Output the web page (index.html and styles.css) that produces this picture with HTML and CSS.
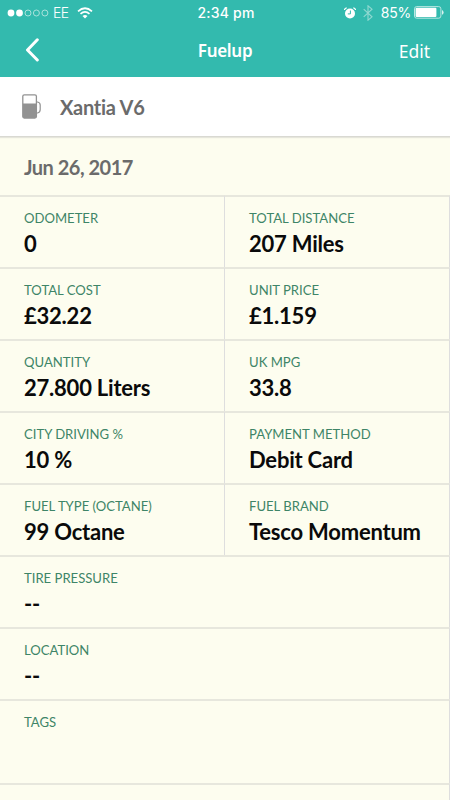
FILE: index.html
```html
<!DOCTYPE html>
<html lang="en">
<head>
<meta charset="utf-8">
<title>Fuelup</title>
<link rel="stylesheet" href="styles.css">
</head>
<body>
<header class="top">
  <div class="status">
    <div class="carrier">
      <svg class="signal" width="42" height="8" viewBox="0 0 42 8"><g fill="#fff"><circle cx="4" cy="4" r="3.4"/><circle cx="12.5" cy="4" r="3.4"/></g><g fill="none" stroke="#c5ebe6" stroke-width=".8"><circle cx="21" cy="4" r="3"/><circle cx="29.4" cy="4" r="3"/><circle cx="37.9" cy="4" r="3"/></g></svg>
      <span class="network">EE</span>
      <svg class="wifi" width="16" height="12" viewBox="0 0 16 12"><g fill="none" stroke="#fff" stroke-width="1.7"><path d="M1 4.3Q8-1.8 15 4.3"/><path d="M3.5 6.9Q8 3 12.5 6.9"/></g><path fill="#fff" d="M5.5 9Q8 7 10.5 9L8 11.5Z"/></svg>
    </div>
    <span class="clock">2:34 pm</span>
    <div class="power">
      <svg class="alarm" width="12" height="12" viewBox="0 0 12 12"><circle cx="6" cy="6.5" r="5" fill="#fff"/><path d="M.5 3Q.7 1 2.7.8M9.3.8Q11.3 1 11.5 3" fill="none" stroke="#fff" stroke-width="1.2"/><path d="M6.4 3.5V6.9H3.8" fill="none" stroke="#33baae" stroke-width="1"/></svg>
      <svg class="bluetooth" width="10" height="16" viewBox="0 0 10 16"><path d="M.7 4.2 9 11.8 5 15.2V.8L9 4.2.7 11.8" fill="none" stroke="#92d9d1" stroke-width="1.1"/></svg>
      <span class="percent">85%</span>
      <svg class="battery" width="30" height="13" viewBox="0 0 30 13"><rect x=".5" y=".6" width="26.4" height="11.6" rx="2.2" fill="none" stroke="#b9e7e2"/><rect x="1.6" y="1.7" width="20.8" height="9.4" rx="1" fill="#fff"/><path d="M28 4Q29.6 4.8 29.6 6.4T28 8.8Z" fill="#d9f2ef"/></svg>
    </div>
  </div>
  <nav class="nav">
    <svg class="back" width="16" height="24" viewBox="0 0 16 24"><path d="M12.3 1.8 2.5 12l9.8 10" fill="none" stroke="#fff" stroke-width="3" stroke-linecap="round" stroke-linejoin="round"/></svg>
    <h1 class="title">Fuelup</h1>
    <span class="edit">Edit</span>
  </nav>
</header>
<section class="vehicle">
  <svg class="pump" width="20" height="25" viewBox="0 0 20 25"><rect x=".8" y=".8" width="13.6" height="23.2" rx="1.5" fill="#fff" stroke="#929292" stroke-width="1.3"/><path d="M.8 9.5H14.4V22.5Q14.4 24 13 24H2.3Q.8 24 .8 22.5Z" fill="#929292"/><path d="M14.7 8h.8q2.7.4 2.7 3v4.500q0 3-2.7 3.500h-.8" fill="none" stroke="#929292" stroke-width="1.2"/></svg>
  <span>Xantia V6</span>
</section>
<main class="details">
  <div class="date">Jun 26, 2017</div>
  <dl class="grid">
    <div class="cell"><dt>ODOMETER</dt><dd>0</dd></div>
    <div class="cell"><dt>TOTAL DISTANCE</dt><dd>207 Miles</dd></div>
    <div class="cell"><dt>TOTAL COST</dt><dd>£32.22</dd></div>
    <div class="cell"><dt>UNIT PRICE</dt><dd>£1.159</dd></div>
    <div class="cell"><dt>QUANTITY</dt><dd>27.800 Liters</dd></div>
    <div class="cell"><dt>UK MPG</dt><dd>33.8</dd></div>
    <div class="cell"><dt>CITY DRIVING %</dt><dd>10 %</dd></div>
    <div class="cell"><dt>PAYMENT METHOD</dt><dd>Debit Card</dd></div>
    <div class="cell"><dt>FUEL TYPE (OCTANE)</dt><dd>99 Octane</dd></div>
    <div class="cell"><dt>FUEL BRAND</dt><dd>Tesco Momentum</dd></div>
    <div class="cell wide"><dt>TIRE PRESSURE</dt><dd>--</dd></div>
    <div class="cell wide"><dt>LOCATION</dt><dd>--</dd></div>
    <div class="cell wide"><dt>TAGS</dt><dd></dd></div>
    <div class="cell wide filler"></div>
  </dl>
</main>
</body>
</html>
```

FILE: styles.css
```css
* { box-sizing: border-box; }
body {
  margin: 0;
  background: #fdfdef;
  font-family: Lato, sans-serif;
  font-variant-ligatures: none;
}
svg { display: block; flex: none; }
.top { height: 77px; background: #33baae; color: #fff; }
.status {
  height: 25px;
  display: grid;
  grid-template-columns: 1fr auto 1fr;
  align-items: center;
  padding: 0 6px 0 7px;
  font: 14px/24px Inter, sans-serif;
}
.carrier, .power { display: flex; align-items: center; }
.network { margin-left: 4px; font-weight: 300; letter-spacing: -.5px; }
.wifi { margin-left: 8px; }
.clock { margin-right: -1px; font-weight: 500; font-size: 14px; letter-spacing: .2px; }
.power { justify-content: flex-end; }
.alarm { margin-right: 1px; }
.bluetooth { margin-left: 6px; }
.percent { margin: 0 3px 0 8px; font-size: 14px; letter-spacing: -.2px; }
.nav {
  height: 52px;
  display: grid;
  grid-template-columns: 1fr auto 1fr;
  align-items: center;
  padding: 0 20px 3px 25px;
  font-family: "Noto Sans", sans-serif;
}
.title { margin: 2px 5px 0 0; font-size: 17px; font-weight: 600; line-height: 24px; letter-spacing: -.3px; }
.edit { justify-self: end; margin-top: 2px; font-size: 17.5px; line-height: 24px; }
.vehicle {
  height: 60px;
  display: flex;
  align-items: center;
  gap: 18px;
  padding: 0 22px;
  background: #fff;
  border-bottom: 1px solid #d9d9d2;
  box-shadow: 0 1px 1px #e6e6dc;
  color: #6b6b6b;
  font-size: 20px;
  font-weight: 700;
  letter-spacing: -.25px;
}
.date {
  height: 58px;
  padding: 0 24px;
  color: #6b6b6b;
  font-size: 20px;
  font-weight: 700;
  letter-spacing: -.5px;
  line-height: 61px;
}
.grid {
  margin: 0;
  display: grid;
  grid-template-columns: 225px 225px;
  grid-template-rows: repeat(7, 72px) 84px 17px;
}
.cell {
  padding: 13px 0 0 24px;
  border-top: 2px solid #e7e7dd;
  border-right: 1px solid #dedede;
}
.wide { grid-column: span 2; }
.filler { padding: 0; }
dt { color: #3e8567; font-size: 13.1px; line-height: 16px; }
dd {
  margin: 5px 0 0;
  color: #0a0a0a;
  font-size: 22px;
  font-weight: 700;
  letter-spacing: -.22px;
  line-height: 26px;
}
```
